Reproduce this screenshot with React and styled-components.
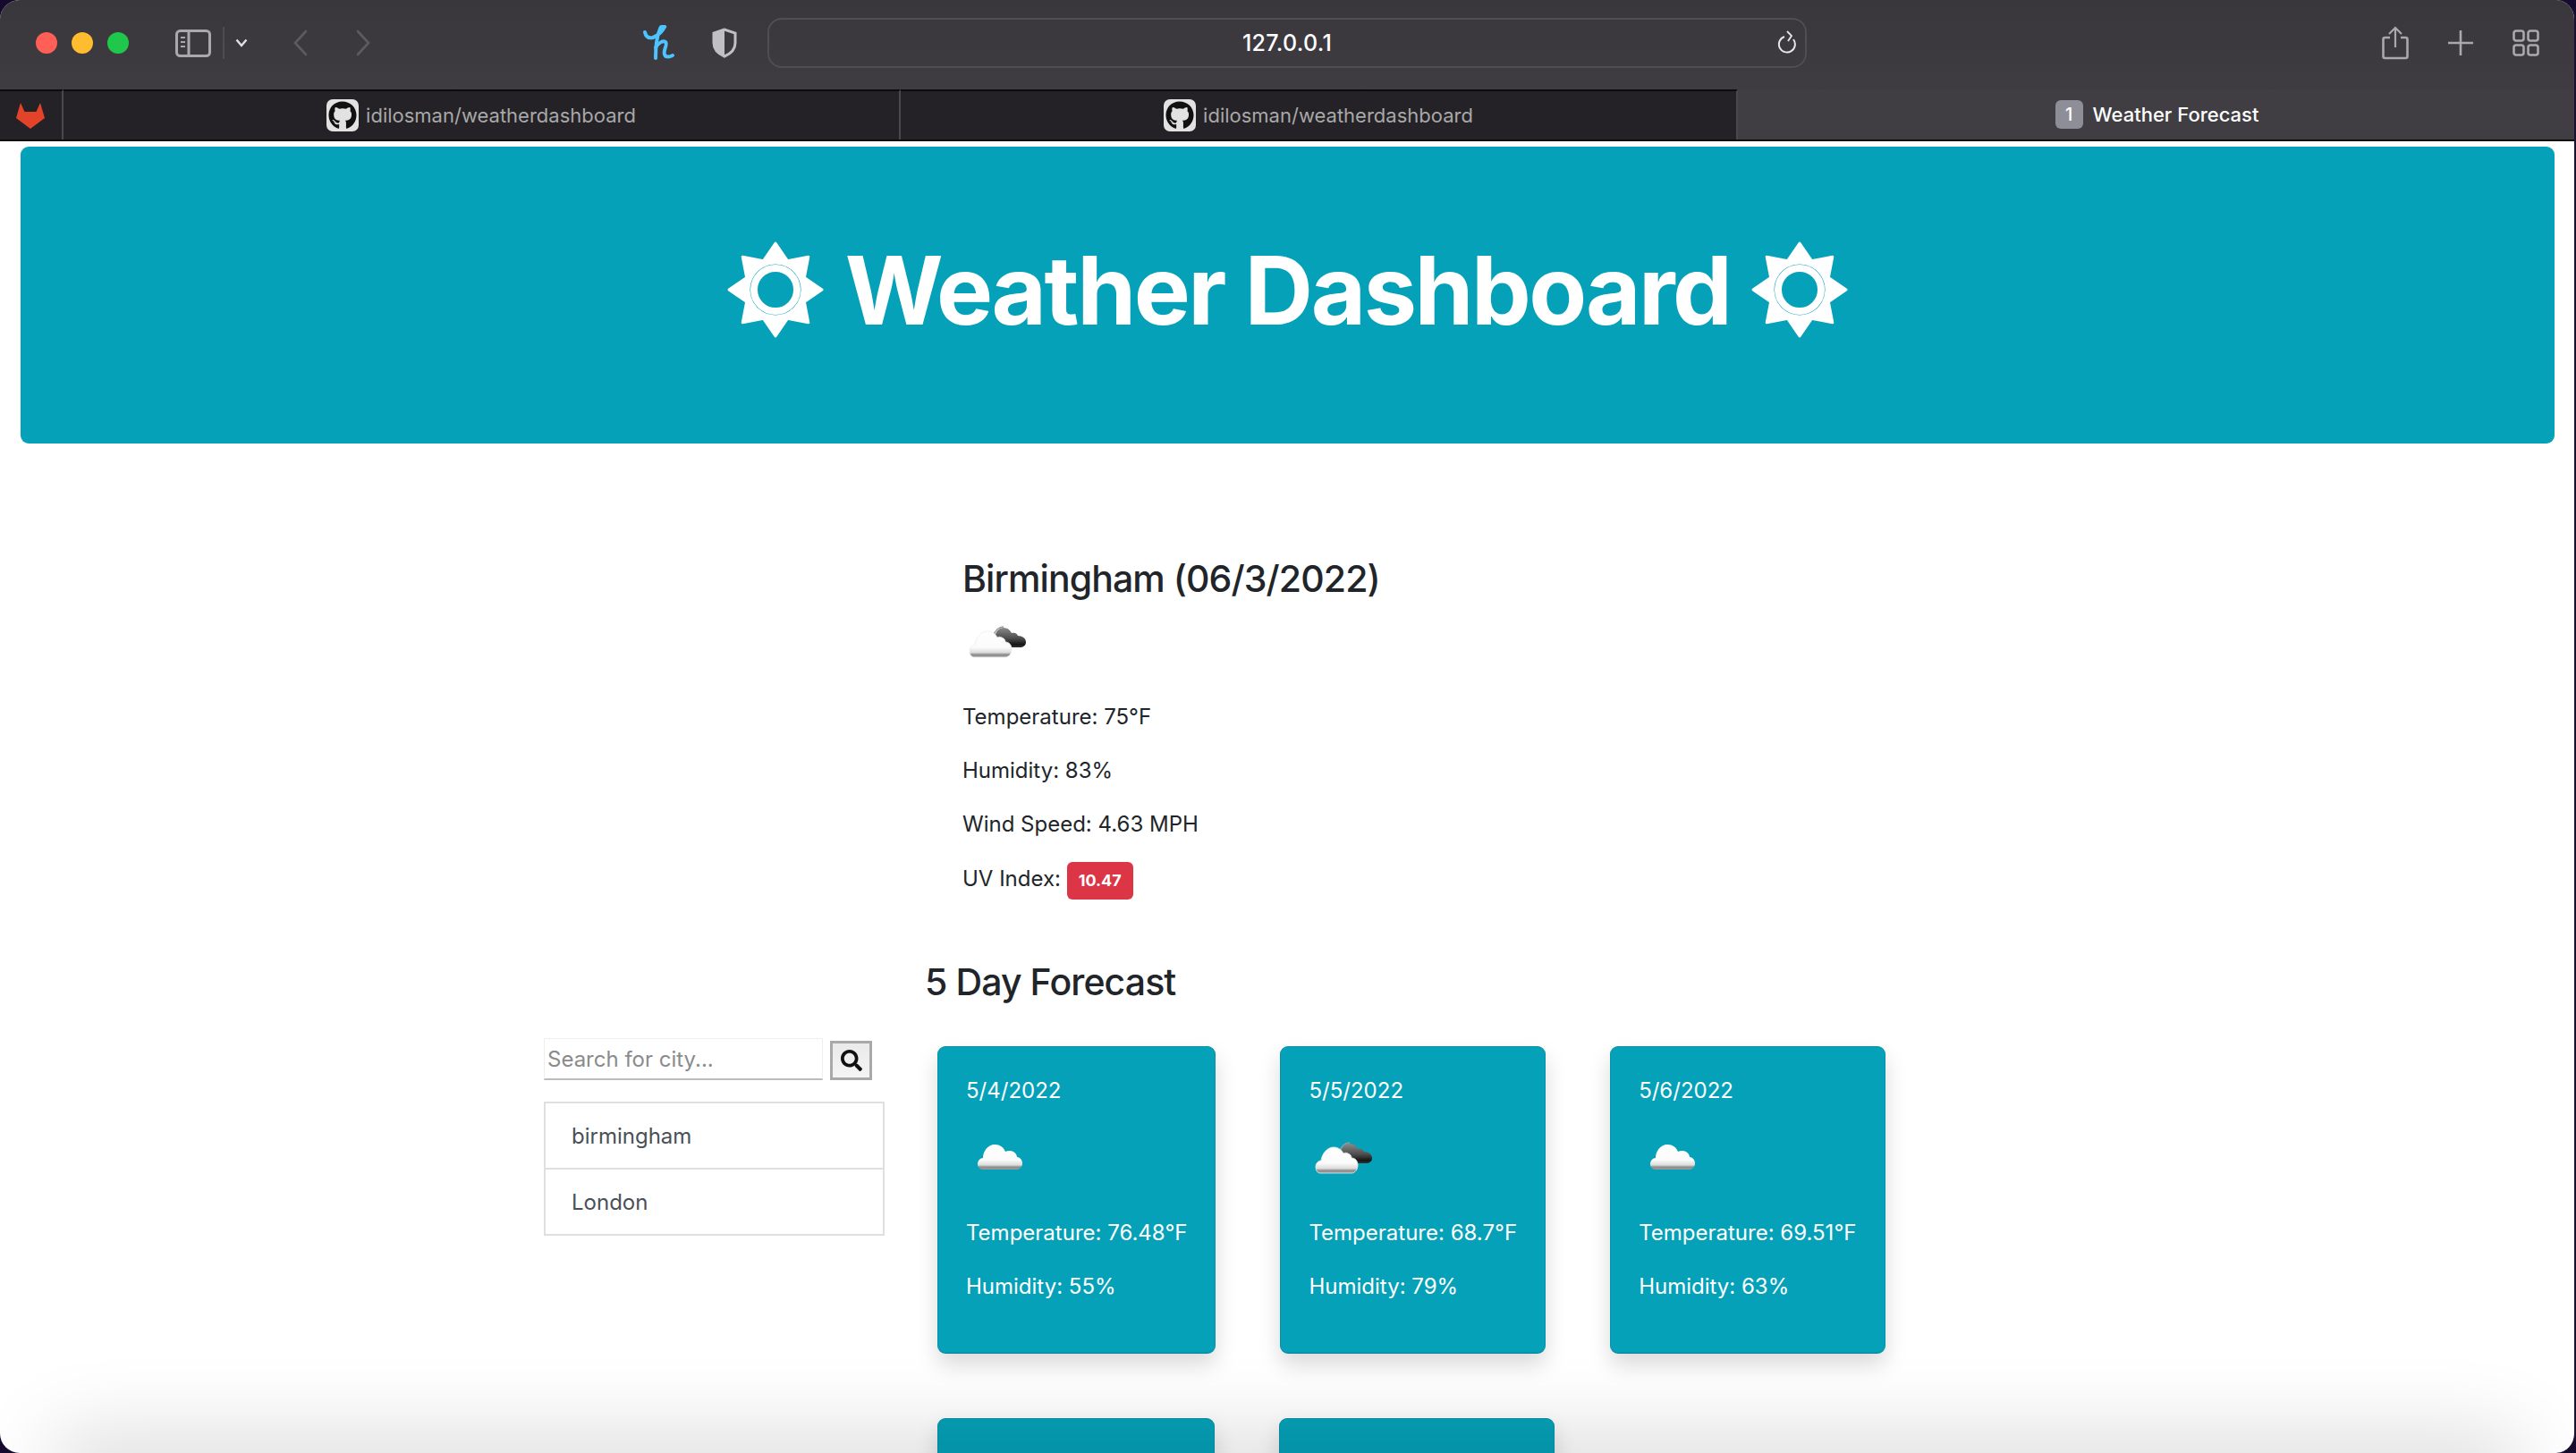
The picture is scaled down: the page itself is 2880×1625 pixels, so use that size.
import React from "react";
import styled, { createGlobalStyle } from "styled-components";
import { FaSearch, FaGithub } from "react-icons/fa";

const days = [
  { date: "5/4/2022", icon: "cloud", temp: "76.48", humidity: "55" },
  { date: "5/5/2022", icon: "broken", temp: "68.7", humidity: "79" },
  { date: "5/6/2022", icon: "cloud", temp: "69.51", humidity: "63" },
];

// 8 pointed star, tips on r=52, valleys on r=35
const starPoints = Array.from({ length: 16 }, (_, i) => {
  const r = i % 2 === 0 ? 52 : 35;
  const a = (i * Math.PI) / 8 - Math.PI / 2;
  return `${(54 + r * Math.cos(a)).toFixed(1)} ${(54 + r * Math.sin(a)).toFixed(1)}`;
}).join("L");

const SunIcon = () => (
  <svg width="108" height="108" viewBox="0 0 108 108">
    <path
      fill="#fff"
      stroke="#fff"
      strokeWidth="3"
      strokeLinejoin="round"
      fillRule="evenodd"
      d={`M${starPoints}Z M54 24a30 30 0 1 0 0.01 0Z`}
    />
    <circle cx="54" cy="54" r="24" fill="none" stroke="#fff" strokeWidth="8" />
  </svg>
);

const CloudDefs = () => (
  <svg width="0" height="0" style={{ position: "absolute" }}>
    <defs>
      <linearGradient id="whiteCloud" x1="0" y1="0" x2="0" y2="1">
        <stop offset="0" stopColor="#ffffff" />
        <stop offset="0.62" stopColor="#fbfbfb" />
        <stop offset="0.82" stopColor="#dcdcdc" />
        <stop offset="0.9" stopColor="#8d8d8d" />
        <stop offset="1" stopColor="#9c9c9c" />
      </linearGradient>
      <linearGradient id="darkCloud" x1="0" y1="0" x2="0" y2="1">
        <stop offset="0" stopColor="#8a8a8a" />
        <stop offset="0.55" stopColor="#4c4c4c" />
        <stop offset="0.85" stopColor="#161616" />
        <stop offset="1" stopColor="#333" />
      </linearGradient>
      <filter id="soft" x="-10%" y="-10%" width="120%" height="120%">
        <feGaussianBlur stdDeviation="0.7" />
      </filter>
    </defs>
  </svg>
);

const CloudIcon = () => (
  <svg width="75" height="75" viewBox="0 0 75 75">
    <path
      filter="url(#soft)"
      fill="url(#whiteCloud)"
      d="M19 46c-4 0-6-3-6-6 0-4 3-7 6-7 0-8 6-15 13-15 6 0 10 3 12 8 2-1 3-1 5-1 5 0 8 4 8 7 3 0 6 3 6 7s-3 7-6 7z"
    />
  </svg>
);

const BrokenIcon = () => (
  <svg width="75" height="75" viewBox="0 0 75 75">
    <path
      filter="url(#soft)"
      fill="url(#darkCloud)"
      d="M37 25c1-5 5-8 9-8 4 0 7 2 9 6 3-1 6 0 7 3 5 0 9 3 9 7s-3 6-7 6H50c-6 0-10-6-13-14z"
    />
    <path fill="none" stroke="#9a9a9a" strokeWidth="1.5" filter="url(#soft)" d="M35 26c1-6 6-10 11-10" />
    <path
      filter="url(#soft)"
      fill="url(#whiteCloud)"
      stroke="#ececec"
      strokeWidth="0.8"
      d="M13 50c-3 0-5-3-5-7 0-4 3-7 6-7 1-8 7-15 14-15 5 0 9 3 11 7 2-1 3-1 5 0 3 1 4 3 4 5 4 0 7 3 7 8s-3 9-7 9z"
    />
  </svg>
);

const App = () => (
  <Window>
    <GlobalStyle />
    <CloudDefs />
    <TopBar>
      <Lights>
        <Light $c="#ff5f57" />
        <Light $c="#febc2e" />
        <Light $c="#1fc84b" />
      </Lights>
      <Tool $ml={52}>
        <svg width="40" height="31" viewBox="0 0 40 31" fill="none" stroke="#a9a9ad" strokeWidth="3">
          <rect x="1.5" y="1.5" width="37" height="28" rx="4" />
          <path d="M15 2v27" />
          <path d="M6 9h5M6 14h5M6 19h5" strokeWidth="2" />
        </svg>
      </Tool>
      <ToolDivider />
      <Tool $ml={12}>
        <svg width="14" height="10" viewBox="0 0 14 10" fill="none" stroke="#e2e2e4" strokeWidth="2.4">
          <path d="M1.5 1.5 7 8l5.5-6.5" />
        </svg>
      </Tool>
      <Tool $ml={50}>
        <svg width="18" height="30" viewBox="0 0 18 30" fill="none" stroke="#5d5b61" strokeWidth="2.6" strokeLinecap="round">
          <path d="M15 2 3 15l12 13" />
        </svg>
      </Tool>
      <Tool $ml={52}>
        <svg width="18" height="30" viewBox="0 0 18 30" fill="none" stroke="#5d5b61" strokeWidth="2.6" strokeLinecap="round">
          <path d="M3 2l12 13L3 28" />
        </svg>
      </Tool>
      <Tool $ml={304}>
        <svg width="36" height="40" viewBox="0 0 36 40" fill="none" stroke="#4dc3ff" strokeWidth="4" strokeLinecap="round">
          <path d="M2 8c1 5 4 7 9 6 6-2 11-8 13-12-1-1-4-1-5 2-4 9-5 22-5 33" />
          <path d="M14 25c3-5 8-8 11-6 3 2-3 10-1 14 1 3 5 3 9 1" />
        </svg>
      </Tool>
      <Tool $ml={40}>
        <svg width="30" height="34" viewBox="0 0 30 34">
          <path
            fill="none"
            stroke="#c0c0c4"
            strokeWidth="3"
            d="M15 2 3 6v11c0 7 5 12 12 15 7-3 12-8 12-15V6z"
          />
          <path fill="#c0c0c4" d="M15 2v30C8 29 3 24 3 17V6z" />
        </svg>
      </Tool>
      <UrlBar>
        <UrlText>127.0.0.1</UrlText>
        <ReloadSlot>
          <svg width="24" height="28" viewBox="0 0 24 28" fill="none" stroke="#e6e6e8" strokeWidth="2">
            <path d="M8 8a9 9 0 1 0 10 3" />
            <path d="M11 2l5 5-4 6" strokeWidth="1.8" />
          </svg>
        </ReloadSlot>
      </UrlBar>
      <RightTools>
        <svg width="30" height="38" viewBox="0 0 30 38" fill="none" stroke="#a9a9ad" strokeWidth="2.6">
          <path d="M9 13H3.500a2 2 0 0 0-2 2v19a2 2 0 0 0 2 2h23a2 2 0 0 0 2-2V15a2 2 0 0 0-2-2H21" />
          <path d="M15 24V2M8 9l7-7 7 7" strokeWidth="2.2" />
        </svg>
        <svg width="28" height="28" viewBox="0 0 28 28" stroke="#a9a9ad" strokeWidth="2.6">
          <path d="M14 0v28M0 14h28" />
        </svg>
        <svg width="30" height="30" viewBox="0 0 30 30" fill="none" stroke="#a9a9ad" strokeWidth="2.6">
          <rect x="1.5" y="1.5" width="11" height="11" rx="2.5" />
          <rect x="17.5" y="1.5" width="11" height="11" rx="2.5" />
          <rect x="1.5" y="17.5" width="11" height="11" rx="2.5" />
          <rect x="17.5" y="17.5" width="11" height="11" rx="2.5" />
        </svg>
      </RightTools>
    </TopBar>

    <TabBar>
      <PinnedTab>
        <svg width="32" height="29" viewBox="0 0 32 29">
          <path fill="#e24329" d="M5 0l4.500 10h13L27 0l5 17-16 12L0 17z" />
        </svg>
      </PinnedTab>
      <Tab>
        <Favicon>
          <FaGithub size={32} color="#111" />
        </Favicon>
        idilosman/weatherdashboard
      </Tab>
      <Tab>
        <Favicon>
          <FaGithub size={32} color="#111" />
        </Favicon>
        idilosman/weatherdashboard
      </Tab>
      <ActiveTab>
        <TabBadge>1</TabBadge>
        Weather Forecast
      </ActiveTab>
    </TabBar>

    <Page>
      <Jumbotron>
        <Title>
          <SunIcon />
          <span>Weather Dashboard</span>
          <SunIcon />
        </Title>
      </Jumbotron>

      <Container>
        <Sidebar>
          <SearchRow>
            <SearchInput placeholder="Search for city..." />
            <SearchButton>
              <FaSearch size={24} color="#111" />
            </SearchButton>
          </SearchRow>
          <CityList>
            <CityItem>birmingham</CityItem>
            <CityItem>London</CityItem>
          </CityList>
        </Sidebar>

        <Main>
          <Today>
            <CityName>Birmingham (06/3/2022)</CityName>
            <CardIcon>
              <BrokenIcon />
            </CardIcon>
            <Stat>Temperature: 75°F</Stat>
            <Stat>Humidity: 83%</Stat>
            <Stat>Wind Speed: 4.63 MPH</Stat>
            <Stat>
              UV Index: <UvBadge>10.47</UvBadge>
            </Stat>
          </Today>
          <ForecastTitle>5 Day Forecast</ForecastTitle>
          <Cards>
            {days.map((d) => (
              <Card key={d.date}>
                <Stat>{d.date}</Stat>
                <CardIcon>{d.icon === "cloud" ? <CloudIcon /> : <BrokenIcon />}</CardIcon>
                <Stat>Temperature: {d.temp}°F</Stat>
                <Stat>Humidity: {d.humidity}%</Stat>
              </Card>
            ))}
            <Card $w={310} />
            <Card $w={308} />
          </Cards>
        </Main>
      </Container>
    </Page>
    <BottomShade />
  </Window>
);

//=================================
//       Styled-Component
//=================================

const GlobalStyle = createGlobalStyle`
  html, body {
    margin: 0;
    height: 1625px;
    overflow: hidden;
    background: #160b2e;
  }
  * {
    box-sizing: border-box;
  }
`;

const Window = styled.div`
  position: relative;
  width: 2880px;
  height: 1625px;
  overflow: hidden;
  border-radius: 22px;
  border-right: 2px solid #1a1030;
  background: #fff;
  font-family: Inter, "Liberation Sans", sans-serif;
  color: #212529;
`;

const TopBar = styled.div`
  display: flex;
  align-items: center;
  height: 100px;
  padding: 0 39px 4px 40px;
  background: linear-gradient(#39373c, #3e3c41);
`;

const Lights = styled.div`
  display: flex;
  gap: 16px;
`;

const Light = styled.span`
  width: 24px;
  height: 24px;
  border-radius: 50%;
  background: ${(p) => p.$c};
`;

const Tool = styled.div`
  display: flex;
  align-items: center;
  margin-left: ${(p) => p.$ml}px;
`;

const ToolDivider = styled.div`
  width: 2px;
  height: 36px;
  margin-left: 13px;
  background: #4e4c52;
`;

const UrlBar = styled.div`
  position: relative;
  display: flex;
  align-items: center;
  justify-content: center;
  width: 1162px;
  height: 56px;
  margin-left: 33px;
  border: 2px solid #504e54;
  border-radius: 16px;
`;

const UrlText = styled.span`
  font-size: 25px;
  font-weight: 500;
  letter-spacing: 0.3px;
  color: #fff;
`;

const ReloadSlot = styled.div`
  position: absolute;
  right: 7px;
  top: 11px;
  display: flex;
`;

const RightTools = styled.div`
  flex: 1;
  display: flex;
  align-items: center;
  justify-content: flex-end;
  gap: 44px;
`;

const TabBar = styled.div`
  display: flex;
  height: 58px;
  border-bottom: 2px solid #0c0c0e;
  font-size: 22px;
`;

const PinnedTab = styled.div`
  display: flex;
  align-items: center;
  justify-content: center;
  width: 71px;
  padding-right: 1px;
  background: #242226;
  border-top: 2px solid #0c0c0e;
  border-right: 2px solid #4a484c;
`;

const Tab = styled.div`
  flex: 0 0 936px;
  display: flex;
  align-items: center;
  justify-content: center;
  gap: 8px;
  background: #242226;
  border-top: 2px solid #0c0c0e;
  border-right: 2px solid #4a484c;
  color: #a8a8a8;
`;

const Favicon = styled.span`
  display: flex;
  align-items: center;
  justify-content: center;
  width: 36px;
  height: 36px;
  border-radius: 7px;
  background: #e2e2e2;
`;

const ActiveTab = styled.div`
  flex: 1;
  display: flex;
  align-items: center;
  justify-content: center;
  gap: 11px;
  padding-left: 2px;
  background: #403e43;
  color: #fff;
  font-weight: 500;
`;

const TabBadge = styled.span`
  display: flex;
  align-items: center;
  justify-content: center;
  width: 31px;
  height: 32px;
  border-radius: 6px;
  background: #8e8e98;
  font-size: 20px;
`;

const Page = styled.div`
  padding-top: 6px;
`;

const Jumbotron = styled.header`
  display: flex;
  justify-content: center;
  align-items: center;
  height: 332px;
  margin: 0 22px 0 23px;
  padding-bottom: 12px;
  border-radius: 9px;
  background: #05a1b8;
  color: #fff;
`;

const Title = styled.h1`
  display: flex;
  align-items: center;
  gap: 24px;
  margin: 0;
  font-size: 106px;
  font-weight: 700;
  letter-spacing: -2.5px;
`;

const Container = styled.div`
  display: flex;
  gap: 44px;
  width: 1662px;
  margin: 126px auto 0;
`;

const Sidebar = styled.aside`
  flex: 0 0 381px;
  margin-right: 1px;
  margin-top: 539px;
`;

const SearchRow = styled.div`
  display: flex;
  align-items: flex-end;
  gap: 8px;
`;

const SearchInput = styled.input`
  width: 312px;
  height: 47px;
  padding: 0 3px;
  border: 1px solid #eeeeee;
  border-bottom: 2px solid #bcbcbc;
  outline: none;
  font-family: inherit;
  font-size: 24px;
  &::placeholder {
    color: #8b8b8b;
  }
`;

const SearchButton = styled.button`
  display: flex;
  align-items: center;
  justify-content: center;
  width: 47px;
  height: 44px;
  padding: 0;
  border: 3px solid #a9a9a9;
  background: linear-gradient(#eaeaea, #f4f4f4);
`;

const CityList = styled.ul`
  list-style: none;
  margin: 26px 0 0;
  padding: 0;
`;

const CityItem = styled.li`
  display: flex;
  align-items: center;
  height: 76px;
  margin-top: -2px;
  padding-left: 29px;
  border: 2px solid #dfdfdf;
  font-size: 24px;
  color: #495057;
`;

const Main = styled.main`
  width: 1200px;
`;

const Today = styled.section`
  padding-left: 42px;
`;

const CityName = styled.h3`
  margin: 0 0 13px;
  font-size: 41px;
  line-height: 50px;
  font-weight: 500;
  letter-spacing: -0.9px;
`;

const Stat = styled.p`
  margin: 0 0 24px;
  font-size: 24px;
  line-height: 36px;
`;

const UvBadge = styled.span`
  display: inline-block;
  padding: 12px 13px;
  border-radius: 6px;
  background: #dc3545;
  color: #fff;
  font-size: 18px;
  line-height: 18px;
  font-weight: 700;
`;

const ForecastTitle = styled.h3`
  margin: 67px 0 47px;
  font-size: 41px;
  line-height: 50px;
  font-weight: 500;
  letter-spacing: -0.9px;
`;

const Cards = styled.div`
  display: flex;
  flex-wrap: wrap;
  gap: 72px;
  margin-left: 14px;
`;

const Card = styled.article`
  width: ${(p) => (p.$w ? `${p.$w}px` : "max-content")};
  height: 344px;
  padding: 31px;
  border: 1px solid #0a93a8;
  border-bottom-width: 2px;
  border-radius: 9px;
  background: #05a1b8;
  color: #fff;
  box-shadow: 0 12px 24px rgba(0, 0, 0, 0.15);
`;

const CardIcon = styled.div`
  height: 75px;
  margin-bottom: 24px;
`;

const BottomShade = styled.div`
  position: absolute;
  left: 80px;
  right: 80px;
  bottom: -40px;
  height: 40px;
  box-shadow: 0 0 90px 20px rgba(0, 0, 0, 0.15);
  pointer-events: none;
`;

export default App;
